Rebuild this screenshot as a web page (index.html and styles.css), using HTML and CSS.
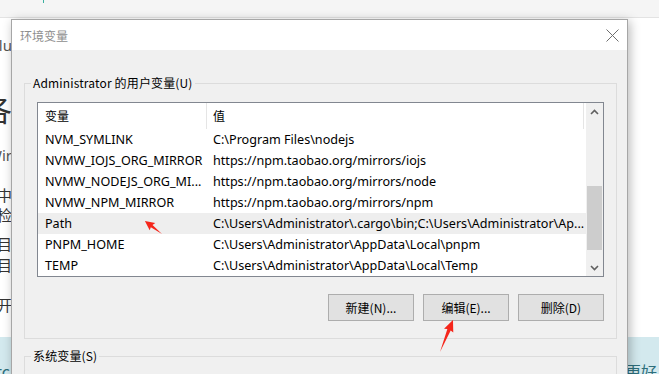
FILE: index.html
```html
<!DOCTYPE html>
<html lang="zh-CN">
<head>
  <meta charset="UTF-8" />
  <meta name="viewport" content="width=device-width, initial-scale=1.0" />
  <title>环境变量</title>
  <link rel="stylesheet" href="styles.css">
</head>
<body>

  <!-- page behind the dialog -->
  <div class="desktop">
    <div class="topbar"><span class="topbar-mark"></span></div>
    <div class="page">
      <div class="page-left">
        <div class="bg-line small m1"><span>Solu</span></div>
        <div class="bg-line big m2"><span>各</span></div>
        <div class="bg-line small m3"><span>Wir</span></div>
        <div class="bg-line m4"><span>中</span></div>
        <div class="bg-line m5"><span>检</span></div>
        <div class="bg-line m6"><span>目</span></div>
        <div class="bg-line m7"><span>目</span></div>
        <div class="bg-line m8"><span>开</span></div>
      </div>
    </div>
    <div class="band">
      <span class="band-left">tc</span>
      <span class="band-right">更好</span>
    </div>
  </div>

  <!-- 环境变量 dialog -->
  <div class="dialog">
    <div class="titlebar">
      <span class="title">环境变量</span>
      <svg class="close" width="13" height="13" viewBox="0 0 13 13">
        <path d="M0.5 0.5L12.5 12.5M12.5 0.5L0.5 12.5" stroke="#6e6e6e" stroke-width="1" fill="none"/>
      </svg>
    </div>

    <div class="dialog-body">
      <fieldset class="group">
        <legend>Administrator 的用户变量(U)</legend>

        <div class="listview">
          <div class="list-main">
            <div class="list-head">
              <span class="col-name">变量</span>
              <span class="col-value">值</span>
            </div>
            <div class="row"><span class="col-name">NVM_SYMLINK</span><span class="col-value">C:\Program Files\nodejs</span></div>
            <div class="row"><span class="col-name">NVMW_IOJS_ORG_MIRROR</span><span class="col-value">https://npm.taobao.org/mirrors/iojs</span></div>
            <div class="row"><span class="col-name">NVMW_NODEJS_ORG_MI...</span><span class="col-value">https://npm.taobao.org/mirrors/node</span></div>
            <div class="row"><span class="col-name">NVMW_NPM_MIRROR</span><span class="col-value">https://npm.taobao.org/mirrors/npm</span></div>
            <div class="row selected"><span class="col-name">Path</span><span class="col-value">C:\Users\Administrator\.cargo\bin;C:\Users\Administrator\Ap...</span></div>
            <div class="row"><span class="col-name">PNPM_HOME</span><span class="col-value">C:\Users\Administrator\AppData\Local\pnpm</span></div>
            <div class="row"><span class="col-name">TEMP</span><span class="col-value">C:\Users\Administrator\AppData\Local\Temp</span></div>
          </div>

          <div class="scrollbar">
            <span class="sb-arrow">
              <svg width="9" height="6" viewBox="0 0 9 6"><path d="M1 5L4.5 1.5L8 5" stroke="#606060" stroke-width="1.6" fill="none"/></svg>
            </span>
            <div class="sb-track"><div class="sb-thumb"></div></div>
            <span class="sb-arrow">
              <svg width="9" height="6" viewBox="0 0 9 6"><path d="M1 1L4.5 4.5L8 1" stroke="#606060" stroke-width="1.6" fill="none"/></svg>
            </span>
          </div>
        </div>

        <div class="buttons">
          <button>新建(N)...</button>
          <button>编辑(E)...</button>
          <button>删除(D)</button>
        </div>
      </fieldset>

      <fieldset class="group">
        <legend>系统变量(S)</legend>
        <div class="group-fill"></div>
      </fieldset>
    </div>
  </div>

  <!-- red annotation arrows -->
  <svg class="marks" width="659" height="374" viewBox="0 0 659 374">
    <g transform="translate(162 234) rotate(-142.6)">
      <polygon points="0,0 13,-1.4 12,-4.6 21.5,0 12,4.6 13,1.4" fill="#f5261b"/>
    </g>
    <g transform="translate(440 352) rotate(-67.9)">
      <polygon points="0,0 24,-1.8 23,-5 34.5,0 23,5 24,1.8" fill="#f5261b"/>
    </g>
  </svg>

</body>
</html>
```

FILE: styles.css
```css
* {
  box-sizing: border-box;
}

html, body {
  margin: 0;
  height: 100%;
  overflow: hidden;
}

body {
  position: relative;
  background: #fff;
  font-family: "Noto Sans", "Noto Sans CJK SC", sans-serif;
  font-size: 12px;
  color: #000;
}

/* background page */
.topbar {
  position: relative;
  height: 18px;
  background: #f5f5f5;
  border-bottom: 1px solid #e3e3e3;
}

.topbar-mark {
  position: absolute;
  left: 43px;
  top: 0;
  width: 1px;
  height: 3px;
  background: #3ab0a0;
}

.page {
  display: flex;
  height: 319px;
}

.page-left {
  width: 12px;
  overflow: hidden;
  display: flex;
  flex-direction: column;
}

.bg-line {
  display: flex;
  justify-content: flex-end;
  height: 16px;
  line-height: 16px;
  font-size: 15px;
  color: #333;
  white-space: nowrap;
  font-family: "Noto Sans CJK SC", sans-serif;
}

.bg-line.small {
  height: 18px;
  line-height: 18px;
  color: #555;
  font-family: "Noto Sans", sans-serif;
}

.bg-line.big {
  height: 32px;
  line-height: 32px;
  font-size: 30px;
}

.m1 { margin-top: 18px; }
.m2 { margin-top: 38px; }
.m3 { margin-top: 22px; }
.m4 { margin-top: 23px; }
.m5 { margin-top: 4px; }
.m6 { margin-top: 13px; }
.m7 { margin-top: 5px; }
.m8 { margin-top: 24px; }

.band {
  display: flex;
  justify-content: space-between;
  align-items: flex-end;
  height: 40px;
  background: #d3e9ee;
  color: #2e6f7c;
  font-family: "Noto Sans CJK SC", sans-serif;
  font-size: 16px;
  line-height: 12px;
  overflow: hidden;
}

.band-left {
  margin-left: -4px;
}

.band-right {
  margin-right: 2px;
}

/* dialog */
.dialog {
  position: absolute;
  left: 11px;
  top: 19px;
  width: 617px;
  height: 370px;
  background: #f0f0f0;
  border: 1px solid #a6a6a6;
  box-shadow: 2px 2px 10px rgba(0, 0, 0, 0.28);
  font-family: "Noto Sans CJK SC", sans-serif;
}

.titlebar {
  display: flex;
  align-items: center;
  justify-content: space-between;
  height: 30px;
  padding: 0 8px 0 8px;
  background: #fff;
}

.title {
  color: #8e8e8e;
  font-size: 12px;
}

.dialog-body {
  padding: 24px 10px 0 12px;
}

.group {
  margin: 0;
  padding: 0 12px 17px 12px;
  border: 1px solid #dcdcdc;
}

.group + .group {
  margin-top: 8px;
}

.group legend {
  margin-left: -6px;
  padding: 0 2px;
  line-height: 18px;
  font-size: 12px;
  letter-spacing: 0.15px;
}

.group-fill {
  height: 40px;
}

/* list view */
.listview {
  display: flex;
  margin-top: 10px;
  height: 175px;
  background: #fff;
  border: 1px solid #828790;
}

.list-main {
  flex: 1;
  overflow: hidden;
}

.list-head {
  display: flex;
  height: 26px;
  line-height: 26px;
  margin-right: 2px;
  border-right: 1px solid #e5e5e5;
}

.list-head .col-name {
  border-right: 1px solid #e5e5e5;
}

.row {
  display: flex;
  height: 21px;
  line-height: 21px;
  white-space: nowrap;
  font-family: "Noto Sans", sans-serif;
  font-size: 12.6px;
}

.row.selected {
  background: #eeeeee;
}

.col-name {
  flex: 0 0 169px;
  padding-left: 7px;
  overflow: hidden;
}

.col-value {
  flex: 1;
  padding-left: 6px;
  overflow: hidden;
}

.scrollbar {
  display: flex;
  flex-direction: column;
  width: 17px;
  background: #f0f0f0;
}

.sb-arrow {
  display: flex;
  align-items: center;
  justify-content: center;
  height: 17px;
}

.sb-track {
  flex: 1;
  padding: 0 1px;
}

.sb-thumb {
  margin-top: 66px;
  height: 64px;
  background: #cdcdcd;
}

/* buttons */
.buttons {
  display: flex;
  justify-content: flex-end;
  gap: 9px;
  margin-top: 17px;
}

button {
  width: 86px;
  height: 27px;
  padding: 0;
  background: #e1e1e1;
  border: 1px solid #adadad;
  font-family: "Noto Sans CJK SC", sans-serif;
  font-size: 12px;
  color: #000;
}

/* annotations */
.marks {
  position: absolute;
  left: 0;
  top: 0;
  pointer-events: none;
}
```
